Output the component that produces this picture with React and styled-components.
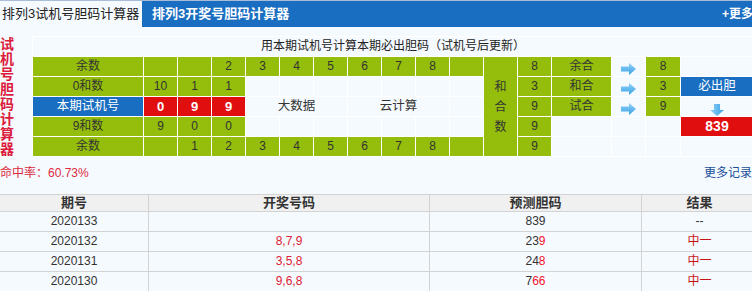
import { createGlobalStyle } from 'styled-components';
import styled from 'styled-components';

const GlobalStyle = createGlobalStyle`
  body {
    margin: 0;
    background: #f5faff;
    overflow: hidden;
    font-family: "Liberation Sans", "Noto Sans CJK SC", sans-serif;
  }
`

const Page = styled.div`
  width: 760px;
  color: #333;
`

const TabBar = styled.div`
  display: flex;
  align-items: stretch;
  height: 26px;
  border-top: 1px solid #a9bdd8;
  background: #1a6ec1;
`
const Tab = styled.div`
  display: flex;
  align-items: center;
  font-size: 13px;
  line-height: 26px;
  white-space: nowrap;
  ${props => props.active ? `
    width: 140px;
    padding-left: 2px;
    background: #f5faff;
    color: #222;
  ` : `
    padding-left: 10px;
    color: #fff;
    font-weight: bold;
  `}
`
const More = styled.div`
  margin-left: auto;
  width: 38px;
  overflow: hidden;
  white-space: nowrap;
  color: #fff;
  font-size: 12px;
  font-weight: bold;
  line-height: 26px;
`

const Calc = styled.div`
  display: flex;
  margin-top: 9px;
`
const SideTitle = styled.div`
  width: 32px;
  padding-top: 1px;
  color: #dc1a3c;
  font-size: 14px;
  font-weight: bold;
  line-height: 15px;
`
const SideChar = styled.div`
  height: 15px;
`

const Grid = styled.div`
  display: grid;
  grid-template-columns: 110px repeat(10, 33px) 33px 33px 59px 33px 34px 72px;
  grid-template-rows: repeat(6, 19px);
  gap: 1px;
  padding: 1px 0 1px 1px;
  background: #fff;
`

const cellBg = {
  green: '#94be0b',
  light: '#f5faff',
  blue: '#1a6ec1',
  red: '#e10e10',
}

const Cell = styled.div`
  display: flex;
  align-items: ${props => props.bottom ? 'flex-end' : 'center'};
  justify-content: center;
  grid-column: span ${props => props.span || 1};
  grid-row: span ${props => props.rows || 1};
  background: ${props => cellBg[props.tone || 'light']};
  color: ${props => (props.tone === 'blue' || props.tone === 'red') ? '#fff' : '#333'};
  font-size: ${props => props.big ? '14px' : props.mid ? '12.5px' : props.bold ? '13px' : '12px'};
  font-weight: ${props => props.bold ? 'bold' : 'normal'};
  line-height: 19px;
  white-space: nowrap;
  padding-top: ${props => props.drop ? '5px' : '0'};
  box-sizing: border-box;
`

const Title = styled(Cell)`
  grid-column: 1 / -1;
  color: #222;
`

const Stack = styled.div`
  display: flex;
  flex-direction: column;
  align-items: center;
  line-height: 20px;
`

function RightArrow() {
  return (
    <svg width="15" height="12" viewBox="0 0 15 12">
      <defs>
        <linearGradient id="ra" x1="0" y1="0" x2="0" y2="1">
          <stop offset="0" stopColor="#8fd2f7" />
          <stop offset="1" stopColor="#3aa2e6" />
        </linearGradient>
      </defs>
      <polygon points="0,3.5 8,3.5 8,0 15,6 8,12 8,8.5 0,8.5" fill="url(#ra)" />
    </svg>
  )
}

function DownArrow() {
  return (
    <svg width="14" height="12" viewBox="0 0 14 12">
      <defs>
        <linearGradient id="da" x1="0" y1="0" x2="1" y2="0">
          <stop offset="0" stopColor="#8fd2f7" />
          <stop offset="1" stopColor="#3aa2e6" />
        </linearGradient>
      </defs>
      <polygon points="4,0 10,0 10,6 14,6 7,12 0,6 4,6" fill="url(#da)" />
    </svg>
  )
}

const InfoRow = styled.div`
  display: flex;
  justify-content: space-between;
  align-items: flex-start;
  box-sizing: border-box;
  height: 37px;
  width: 752px;
  padding-top: 8px;
  font-size: 12px;
  line-height: 16px;
`
const Rate = styled.span`
  color: #dc2a3c;
  font-size: 12px;
`
const MoreLink = styled.span`
  color: #1a4e9a;
  font-size: 12px;
`

const History = styled.table`
  border-collapse: collapse;
  table-layout: fixed;
  width: 754px;
  margin-left: -1px;
  font-size: 12px;
`
const Th = styled.th`
  width: ${props => props.w}px;
  height: 16px;
  padding: 0;
  border: 1px solid #d3d3d3;
  background: #f0f0f0;
  color: #333;
  font-size: 13px;
  line-height: 16px;
`
const Td = styled.td`
  height: 19px;
  padding: 0;
  border: 1px solid #d3d3d3;
  text-align: center;
  line-height: 19px;
  color: ${props => props.red ? '#dd2233' : '#333'};
  font-size: 12px;
`
const Hit = styled.span`
  color: #f0142a;
`
const Win = styled.span`
  color: #c81414;
`

const history = [
  { no: '2020133', draw: '', pred: ['839', ''], res: '--' },
  { no: '2020132', draw: '8,7,9', pred: ['23', '9'], res: '中一' },
  { no: '2020131', draw: '3,5,8', pred: ['24', '8'], res: '中一' },
  { no: '2020130', draw: '9,6,8', pred: ['7', '66'], res: '中一' },
]

function App() {
  return (
    <Page>
      <GlobalStyle />
      <TabBar>
        <Tab active>排列3试机号胆码计算器</Tab>
        <Tab>排列3开奖号胆码计算器</Tab>
        <More>+更多</More>
      </TabBar>

      <Calc>
        <SideTitle>
          {'试机号胆码计算器'.split('').map((c, i) => <SideChar key={i}>{c}</SideChar>)}
        </SideTitle>
        <Grid>
          <Title>用本期试机号计算本期必出胆码（试机号后更新）</Title>

          <Cell tone='green'>余数</Cell>
          <Cell tone='green' />
          <Cell tone='green' />
          {['2', '3', '4', '5', '6', '7', '8'].map(n => <Cell key={n} tone='green'>{n}</Cell>)}
          <Cell tone='green' />
          <Cell tone='green' rows={5}>
            <Stack><span>和</span><span>合</span><span>数</span></Stack>
          </Cell>
          <Cell tone='green'>8</Cell>
          <Cell tone='green'>余合</Cell>
          <Cell drop><RightArrow /></Cell>
          <Cell tone='green'>8</Cell>
          <Cell />

          <Cell tone='green'>0和数</Cell>
          <Cell tone='green'>10</Cell>
          <Cell tone='green'>1</Cell>
          <Cell tone='green'>1</Cell>
          {[0, 1, 2, 3, 4, 5, 6].map(i => <Cell key={i} />)}
          <Cell tone='green'>3</Cell>
          <Cell tone='green'>和合</Cell>
          <Cell drop><RightArrow /></Cell>
          <Cell tone='green'>3</Cell>
          <Cell tone='blue' mid>必出胆</Cell>

          <Cell tone='blue' mid>本期试机号</Cell>
          <Cell tone='red' bold>0</Cell>
          <Cell tone='red' bold>9</Cell>
          <Cell tone='red' bold>9</Cell>
          <Cell span={3} mid>大数据</Cell>
          <Cell span={3} mid>云计算</Cell>
          <Cell />
          <Cell tone='green'>9</Cell>
          <Cell tone='green'>试合</Cell>
          <Cell drop><RightArrow /></Cell>
          <Cell tone='green'>9</Cell>
          <Cell bottom><DownArrow /></Cell>

          <Cell tone='green'>9和数</Cell>
          <Cell tone='green'>9</Cell>
          <Cell tone='green'>0</Cell>
          <Cell tone='green'>0</Cell>
          {[0, 1, 2, 3, 4, 5, 6].map(i => <Cell key={i} />)}
          <Cell tone='green'>9</Cell>
          <Cell />
          <Cell />
          <Cell />
          <Cell tone='red' bold big>839</Cell>

          <Cell tone='green'>余数</Cell>
          <Cell tone='green' />
          {['1', '2', '3', '4', '5', '6', '7', '8'].map(n => <Cell key={n} tone='green'>{n}</Cell>)}
          <Cell tone='green' />
          <Cell tone='green'>9</Cell>
          <Cell />
          <Cell />
          <Cell />
          <Cell />
        </Grid>
      </Calc>

      <InfoRow>
        <Rate>命中率：60.73%</Rate>
        <MoreLink>更多记录</MoreLink>
      </InfoRow>

      <History>
        <thead>
          <tr>
            <Th w={148}>期号</Th>
            <Th w={280}>开奖号码</Th>
            <Th w={211}>预测胆码</Th>
            <Th w={115}>结果</Th>
          </tr>
        </thead>
        <tbody>
          {history.map(row => (
            <tr key={row.no}>
              <Td>{row.no}</Td>
              <Td red>{row.draw}</Td>
              <Td>{row.pred[0]}<Hit>{row.pred[1]}</Hit></Td>
              <Td>{row.res === '--' ? row.res : <Win>{row.res}</Win>}</Td>
            </tr>
          ))}
        </tbody>
      </History>
    </Page>
  )
}
export default App;
